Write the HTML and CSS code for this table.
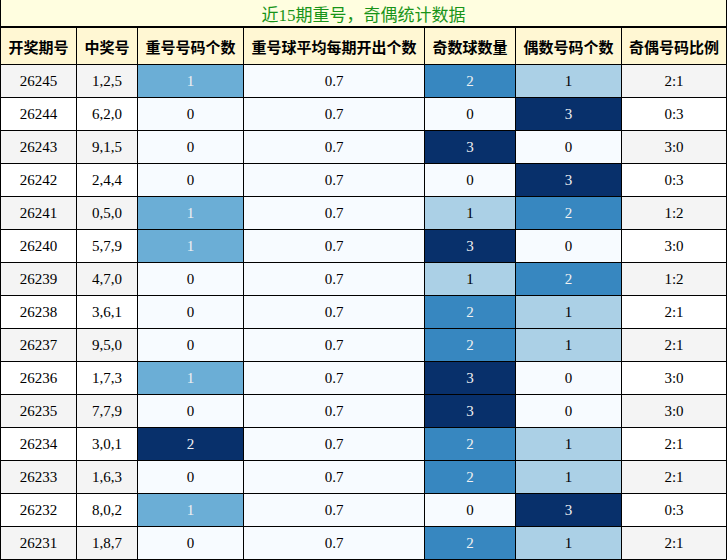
FILE: index.html
```html
<!DOCTYPE html>
<html>
<head>
<meta charset="utf-8">
<link rel="stylesheet" href="styles.css">
</head>
<body>
<table class="stats">
<colgroup>
<col class="c1"><col class="c2"><col class="c3"><col class="c4"><col class="c5"><col class="c6"><col class="c7">
</colgroup>
<thead>
<tr class="title-row"><th colspan="7" class="title">近15期重号，奇偶统计数据</th></tr>
<tr class="head-row">
<th>开奖期号</th><th>中奖号</th><th>重号号码个数</th><th>重号球平均每期开出个数</th><th>奇数球数量</th><th>偶数号码个数</th><th>奇偶号码比例</th>
</tr>
</thead>
<tbody>
<tr class="odd"><td>26245</td><td>1,2,5</td><td class="b3-1">1</td><td class="b0">0.7</td><td class="b4-2">2</td><td class="b4-1">1</td><td>2:1</td></tr>
<tr><td>26244</td><td>6,2,0</td><td class="b0">0</td><td class="b0">0.7</td><td class="b0">0</td><td class="b4-3">3</td><td>0:3</td></tr>
<tr class="odd"><td>26243</td><td>9,1,5</td><td class="b0">0</td><td class="b0">0.7</td><td class="b4-3">3</td><td class="b0">0</td><td>3:0</td></tr>
<tr><td>26242</td><td>2,4,4</td><td class="b0">0</td><td class="b0">0.7</td><td class="b0">0</td><td class="b4-3">3</td><td>0:3</td></tr>
<tr class="odd"><td>26241</td><td>0,5,0</td><td class="b3-1">1</td><td class="b0">0.7</td><td class="b4-1">1</td><td class="b4-2">2</td><td>1:2</td></tr>
<tr><td>26240</td><td>5,7,9</td><td class="b3-1">1</td><td class="b0">0.7</td><td class="b4-3">3</td><td class="b0">0</td><td>3:0</td></tr>
<tr class="odd"><td>26239</td><td>4,7,0</td><td class="b0">0</td><td class="b0">0.7</td><td class="b4-1">1</td><td class="b4-2">2</td><td>1:2</td></tr>
<tr><td>26238</td><td>3,6,1</td><td class="b0">0</td><td class="b0">0.7</td><td class="b4-2">2</td><td class="b4-1">1</td><td>2:1</td></tr>
<tr class="odd"><td>26237</td><td>9,5,0</td><td class="b0">0</td><td class="b0">0.7</td><td class="b4-2">2</td><td class="b4-1">1</td><td>2:1</td></tr>
<tr><td>26236</td><td>1,7,3</td><td class="b3-1">1</td><td class="b0">0.7</td><td class="b4-3">3</td><td class="b0">0</td><td>3:0</td></tr>
<tr class="odd"><td>26235</td><td>7,7,9</td><td class="b0">0</td><td class="b0">0.7</td><td class="b4-3">3</td><td class="b0">0</td><td>3:0</td></tr>
<tr><td>26234</td><td>3,0,1</td><td class="b4-3">2</td><td class="b0">0.7</td><td class="b4-2">2</td><td class="b4-1">1</td><td>2:1</td></tr>
<tr class="odd"><td>26233</td><td>1,6,3</td><td class="b0">0</td><td class="b0">0.7</td><td class="b4-2">2</td><td class="b4-1">1</td><td>2:1</td></tr>
<tr><td>26232</td><td>8,0,2</td><td class="b3-1">1</td><td class="b0">0.7</td><td class="b0">0</td><td class="b4-3">3</td><td>0:3</td></tr>
<tr class="odd"><td>26231</td><td>1,8,7</td><td class="b0">0</td><td class="b0">0.7</td><td class="b4-2">2</td><td class="b4-1">1</td><td>2:1</td></tr>
</tbody>
</table>
</body>
</html>
```
FILE: styles.css
```css
html, body {
  margin: 0;
  padding: 0;
  background: #ffffff;
}
.stats {
  border-collapse: collapse;
  table-layout: fixed;
  width: 727px;
  font-family: "Liberation Serif", "Noto Sans CJK SC", serif;
  font-size: 15px;
  color: #000;
}
.c1 { width: 76px; }
.c2 { width: 61px; }
.c3 { width: 106px; }
.c4 { width: 181px; }
.c5 { width: 91px; }
.c6 { width: 106px; }
.c7 { width: 105px; }
.stats th, .stats td {
  border: 1px solid #000;
  padding: 0;
  text-align: center;
  vertical-align: middle;
  white-space: nowrap;
  overflow: hidden;
}
.stats td {
  height: 32px;
  background: #ffffff;
}
.odd td { background: #f4f4f4; }
.stats .title {
  border-top: none;
  border-bottom: 2px solid #000;
  background: #fffee0;
  color: #189418;
  font-size: 17px;
  font-weight: normal;
  height: 26px;
}
.head-row th {
  background: #fff7d3;
  font-weight: bold;
  font-size: 15px;
  height: 36px;
}
.stats td.b0 { background: #f7fbff; color: #000; }
.stats td.b3-1 { background: #6baed6; color: #f1f1f1; }
.stats td.b4-1 { background: #abd0e6; color: #000; }
.stats td.b4-2 { background: #3787c0; color: #f1f1f1; }
.stats td.b4-3 { background: #08306b; color: #f1f1f1; }
```
